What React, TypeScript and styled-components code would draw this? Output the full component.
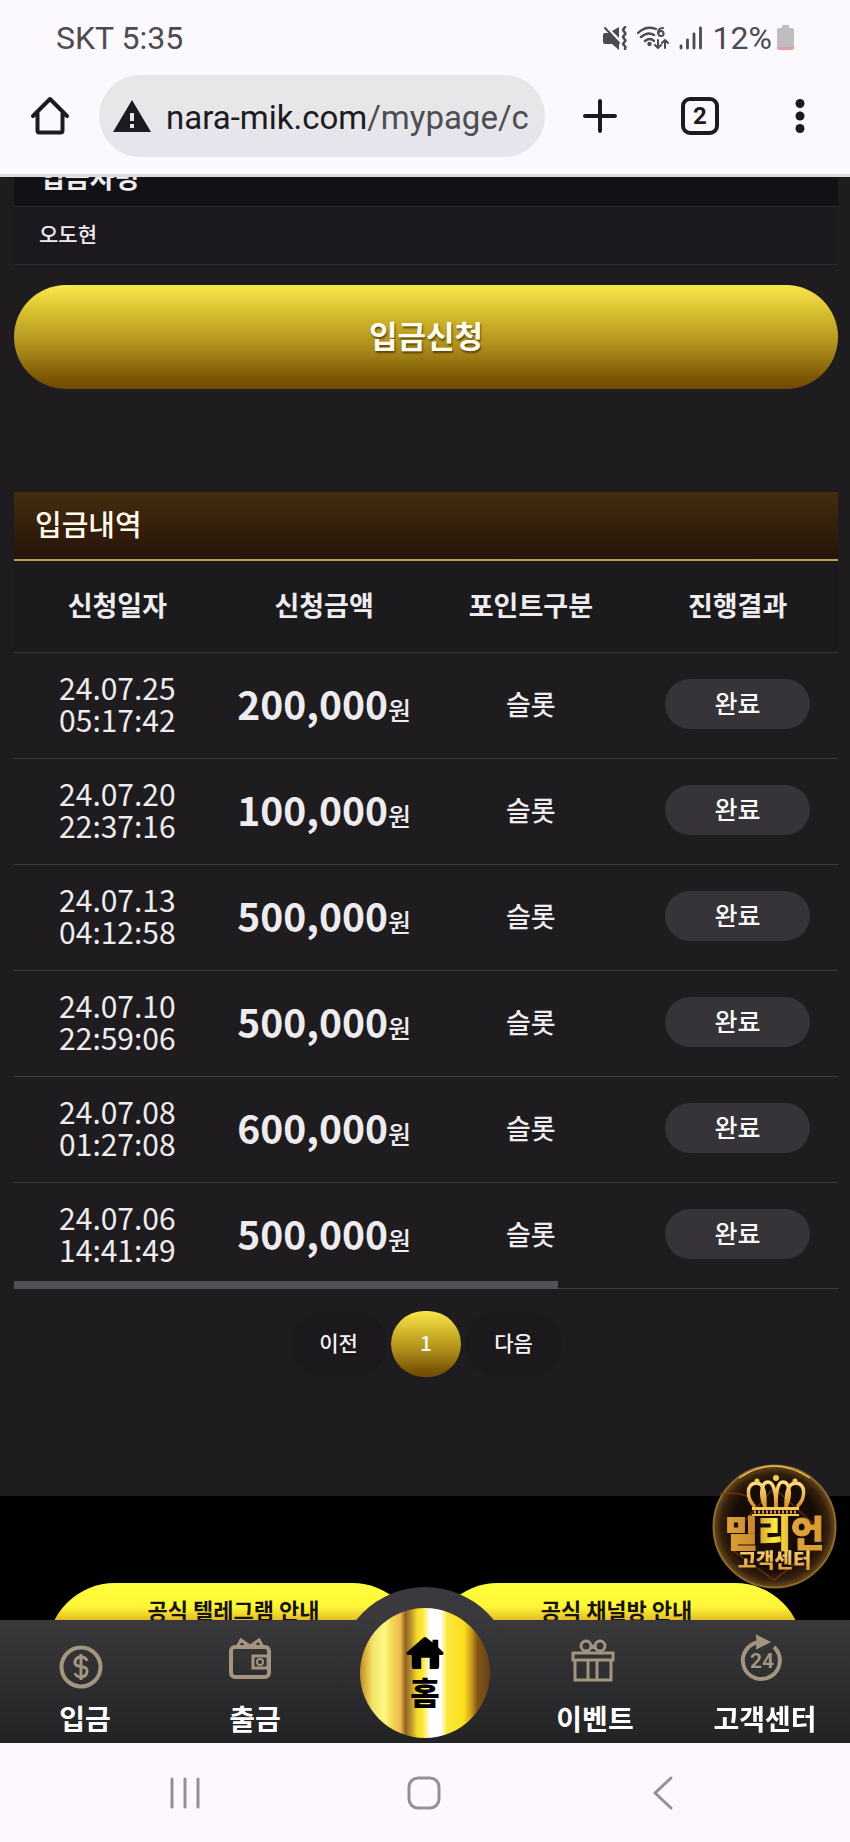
import React from 'react';
import styled, { createGlobalStyle } from 'styled-components';

const KR = '"Noto Sans CJK KR", "Noto Sans", sans-serif';
const GOLD = 'linear-gradient(#fbe74b 0%, #d3b92c 30%, #a98a1a 62%, #7a5604 90%, #6f4a08 100%)';

const GlobalStyle = createGlobalStyle`
  * { box-sizing: border-box; }
  body { margin: 0; background: #1f1c20; font-family: ${KR}; }
  button { border: 0; padding: 0; background: none; color: inherit; font-family: inherit; cursor: pointer; }
  a { color: inherit; text-decoration: none; }
`;

const Phone = styled.div`
  height: 100vh;
  display: flex;
  flex-direction: column;
`;

/* ---------- browser chrome ---------- */

const Chrome = styled.header`
  flex: none;
  background: #fbf9fe;
  border-bottom: 3px solid #dcdbe0;
  font-family: Roboto, sans-serif;
`;

const StatusBar = styled.div`
  height: 75px;
  padding: 0 56px;
  display: flex;
  align-items: center;
  justify-content: space-between;
  color: #4c4b4f;
  font-size: 32px;
`;

const StatusIcons = styled.div`
  display: flex;
  align-items: center;
  gap: 10px;
`;

const Battery = styled.span`
  display: flex;
  align-items: center;
  gap: 5px;
`;

const Toolbar = styled.div`
  display: flex;
  align-items: center;
  padding: 0 0 17px 30px;
`;

const HomeButton = styled.button`
  width: 40px;
  height: 40px;
  margin-right: 29px;
`;

const AddressBar = styled.div`
  flex: 1;
  min-width: 0;
  height: 82px;
  display: flex;
  align-items: center;
  gap: 15px;
  padding: 0 14px;
  margin-right: 5px;
  border-radius: 41px;
  background: linear-gradient(#e7e6e9 50%, #e6e4ef);
`;

const Url = styled.span`
  padding-top: 3px;
  color: #1c1b1f;
  font-size: 33px;
  line-height: 40px;
  white-space: nowrap;
  overflow: hidden;
`;

const UrlPath = styled.span`
  color: #4e4d52;
`;

const ToolButton = styled.button`
  width: 100px;
  height: 64px;
  display: flex;
  align-items: center;
  justify-content: center;
`;

const TabCount = styled.span`
  width: 38px;
  height: 38px;
  border: 4px solid #1c1b1f;
  border-radius: 9px;
  color: #1c1b1f;
  font: 700 24px/30px Roboto, sans-serif;
  text-align: center;
`;

/* ---------- web page ---------- */

const PageArea = styled.div`
  position: relative;
  flex: 1;
  min-height: 0;
  display: flex;
  flex-direction: column;
`;

const PageScroll = styled.main`
  flex: 1;
  min-height: 0;
  overflow-y: auto;
  scrollbar-width: none;
  background: #1f1c20;
  color: #eeecef;
`;

const Content = styled.div`
  padding: 0 12px 0 14px;
`;

const Field = styled.div`
  margin-top: -28px;
  margin-bottom: 20px;
  background: #1b191d;
`;

const FieldLabel = styled.label`
  display: block;
  height: 58px;
  padding: 8px 26px 0;
  background: #121115;
  border-bottom: 1px solid #2e2d31;
  font-size: 27px;
  font-weight: 700;
  line-height: 40px;
`;

const FieldInput = styled.input`
  display: block;
  width: 100%;
  height: 58px;
  padding: 0 25px 6px;
  border: 0;
  border-bottom: 1px solid #2e2d31;
  background: none;
  color: #eeecef;
  font: 500 21px ${KR};
`;

const SubmitButton = styled.button`
  display: block;
  width: 100%;
  height: 104px;
  padding-bottom: 6px;
  border-radius: 52px;
  background: ${GOLD};
  color: #fffdf2;
  font-size: 31px;
  font-weight: 700;
  text-shadow: 1px 2px 2px rgba(60, 40, 0, 0.7);
`;

const SectionTitle = styled.h2`
  margin: 103px 0 0;
  height: 69px;
  padding: 0 21px;
  border-bottom: 2px solid #bba04c;
  background: linear-gradient(#442d0d, #26130a);
  color: #fff9ec;
  font-size: 29px;
  font-weight: 500;
  line-height: 62px;
`;

const TableFrame = styled.div`
  position: relative;
  overflow: hidden;
`;

const Table = styled.table`
  width: calc(100% + 3px);
  table-layout: fixed;
  border-collapse: collapse;
`;

const HeadCell = styled.th`
  height: 91px;
  padding: 0 0 4px;
  border-bottom: 1px solid #333236;
  background: #1b1a1c;
  font-size: 27px;
  font-weight: 700;
`;

const Cell = styled.td`
  height: 106px;
  padding: 0 0 4px;
  border-bottom: 1px solid #3b3a3e;
  text-align: center;
  font-size: 27px;
  font-weight: 500;
`;

const DateText = styled.time`
  display: block;
  font-size: 30px;
  font-weight: 400;
  line-height: 32px;
`;

const Amount = styled.span`
  font-size: 25px;
  white-space: nowrap;
`;

const AmountValue = styled.strong`
  font-size: 39px;
  line-height: 50px;
`;

const StatusPill = styled.span`
  display: block;
  width: 145px;
  height: 50px;
  margin: 2px auto 0;
  border-radius: 25px;
  background: #363438;
  color: #fbfafc;
  font-size: 25px;
  font-weight: 500;
  line-height: 46px;
`;

const ScrollThumb = styled.div`
  position: absolute;
  left: 0;
  bottom: 0;
  width: 66%;
  height: 8px;
  background: #535156;
`;

const Pagination = styled.nav`
  display: flex;
  justify-content: center;
  align-items: center;
  gap: 4px;
  padding: 22px 0 119px;
`;

const PageButton = styled.button<{ $current?: boolean }>`
  width: ${(p) => (p.$current ? 70 : 97)}px;
  height: ${(p) => (p.$current ? 66 : 64)}px;
  padding-bottom: 4px;
  border-radius: 35px;
  background: ${(p) => (p.$current ? GOLD : '#1b191c')};
  color: #f6f4f7;
  font-size: 21px;
  font-weight: 500;
`;

const Footer = styled.footer`
  min-height: 190px;
  padding: 87px 47px 0;
  background: #000;
  display: grid;
  grid-template-columns: 1fr 1fr;
  gap: 10px;
`;

const PromoLink = styled.a`
  height: 136px;
  padding-top: 6px;
  border-radius: 68px;
  background: linear-gradient(#ffff3e 0, #fdf636 24px, #dcae20 40px, #a87a10 100%);
  color: #17120a;
  font-size: 22px;
  font-weight: 700;
  line-height: 40px;
  text-align: center;
`;

const CenterBadge = styled.a`
  position: absolute;
  right: 13px;
  bottom: 31px;
  width: 125px;
  height: 125px;
`;

/* ---------- bottom navigation ---------- */

const BottomNav = styled.nav`
  position: relative;
  flex: none;
  height: 123px;
  display: grid;
  grid-template-columns: repeat(5, 1fr);
  background: linear-gradient(#39383b, #232225);
`;

const NavItem = styled.a`
  display: flex;
  flex-direction: column;
  align-items: center;
  justify-content: space-between;
  padding: 14px 0 5px;
  color: #fff;
  font-size: 28px;
  font-weight: 700;
  line-height: 40px;
  white-space: nowrap;
`;

const NavIcon = styled.svg<{ $low?: boolean }>`
  width: 50px;
  height: 50px;
  margin: ${(p) => (p.$low ? 8 : 0)}px 8px 0 0;
  fill: none;
  stroke: #a3957e;
  stroke-width: 4;
`;

const HomeRing = styled.div`
  position: absolute;
  left: 50%;
  top: -33px;
  width: 176px;
  height: 156px;
  margin-left: -88px;
  border-radius: 88px 88px 0 0;
  background: linear-gradient(#3b393d 33px, #39383b 33px, #232225);
  display: flex;
  justify-content: center;
  padding-top: 21px;
`;

const HomeLink = styled.a`
  width: 130px;
  height: 130px;
  border-radius: 50%;
  display: flex;
  flex-direction: column;
  align-items: center;
  padding-top: 28px;
  background: linear-gradient(
    90deg,
    #b98b2a 0%, #dcb941 5%, #f3e46c 10%, #fdfa84 19%, #f6dc58 24%, #efb950 31%,
    #8f6420 35%, #b98f2c 39%, #f4dc30 44%, #fbe92e 48%, #fff 54%, #fff 62%,
    #fbe83c 67%, #fbe01e 80%, #c8971a 86%, #855716 90%, #64421a 100%
  );
  color: #000;
  font-size: 32px;
  font-weight: 900;
  line-height: 42px;
`;

const SystemNav = styled.div`
  flex: none;
  height: 99px;
  display: flex;
  align-items: center;
  justify-content: space-around;
  padding: 0 68px 0 65px;
  background: #fdf8fe;
`;

const SystemButton = styled.button`
  width: 40px;
  height: 40px;
`;

const Stroke = styled.svg`
  display: block;
  fill: none;
  stroke-linecap: round;
  stroke-linejoin: round;
`;

const ROWS = [
  ['24.07.25', '05:17:42', '200,000'],
  ['24.07.20', '22:37:16', '100,000'],
  ['24.07.13', '04:12:58', '500,000'],
  ['24.07.10', '22:59:06', '500,000'],
  ['24.07.08', '01:27:08', '600,000'],
  ['24.07.06', '14:41:49', '500,000'],
];

function BrowserChrome() {
  return (
    <Chrome>
      <StatusBar>
        <span>SKT 5:35</span>
        <StatusIcons>
          <Stroke width="24" height="24" viewBox="0 0 24 24" stroke="#4c4b4f" strokeWidth="2">
            <path d="M9 5l7-4v11z" fill="#4c4b4f" stroke="none" />
            <path d="M0 9q0-2 2-2h4l10 10v7l-7-6H2q-2 0-2-2z" fill="#4c4b4f" stroke="none" />
            <path d="M3 1l14 15" stroke="#fbf9fe" strokeWidth="2" />
            <path d="M2 2l14 15" />
            <path d="M22 1l-2 3 2.500 3.500L20 11l2.500 3.500L20 18l2.500 3-.5 2" strokeWidth="2.500" />
          </Stroke>
          <Stroke width="32" height="24" viewBox="0 0 32 24" stroke="#4c4b4f" strokeWidth="2.400">
            <path d="M1 7Q9-1 19 3M4 11q7-6 13-2M8 15q5-4 9 0" />
            <circle cx="12.500" cy="18" r="1" />
            <path d="M26 2q-5 0-5 5" strokeWidth="2" />
            <circle cx="24" cy="7.500" r="2.600" strokeWidth="2" />
            <path d="M21 14v8m-3-3l3 3 3-3M28 22v-8m-3 3l3-3 3 3" strokeWidth="2" />
          </Stroke>
          <Stroke width="24" height="24" viewBox="0 0 24 24" stroke="#4c4b4f" strokeWidth="2.800">
            <path d="M2 20v2M8.500 14v8M15 8v14M21.500 2v20" />
          </Stroke>
          <Battery>
            12%
            <svg width="17" height="25" viewBox="0 0 17 25">
              <path d="M5 0h7v3h3q2 0 2 2v17H0V5q0-2 2-2h3z" fill="#bfbdc0" />
              <path d="M0 22h17v1q0 2-2 2H2q-2 0-2-2z" fill="#e0a0a0" />
            </svg>
          </Battery>
        </StatusIcons>
      </StatusBar>
      <Toolbar>
        <HomeButton aria-label="홈페이지">
          <Stroke width="40" height="40" viewBox="0 0 40 40" stroke="#1c1b1f" strokeWidth="4">
            <path d="M3 20L20 3l17 17M7.500 17v17.500q0 2 2 2h21q2 0 2-2V17" />
          </Stroke>
        </HomeButton>
        <AddressBar>
          <svg width="38" height="32" viewBox="0 0 38 32">
            <path d="M19 0l19 32H0z" fill="#1c1b1f" />
            <path d="M17 13h4v8h-4zM17 24h4v4h-4z" fill="#e7e6e9" />
          </svg>
          <Url>
            nara-mik.com<UrlPath>/mypage/c</UrlPath>
          </Url>
        </AddressBar>
        <ToolButton aria-label="새 탭">
          <Stroke width="36" height="36" viewBox="0 0 36 36" stroke="#1c1b1f" strokeWidth="4">
            <path d="M18 3v30M3 18h30" />
          </Stroke>
        </ToolButton>
        <ToolButton aria-label="탭 전환">
          <TabCount>2</TabCount>
        </ToolButton>
        <ToolButton aria-label="더보기">
          <svg width="10" height="36" viewBox="0 0 10 36" fill="#1c1b1f">
            <circle cx="5" cy="5.500" r="4.500" />
            <circle cx="5" cy="18" r="4.500" />
            <circle cx="5" cy="30.500" r="4.500" />
          </svg>
        </ToolButton>
      </Toolbar>
    </Chrome>
  );
}

function BadgeArt() {
  return (
    <svg width="125" height="125" viewBox="0 0 125 125">
      <defs>
        <radialGradient id="orb">
          <stop offset="0" stopColor="#1a0d04" />
          <stop offset="0.700" stopColor="#160b05" />
          <stop offset="0.880" stopColor="#35200c" />
          <stop offset="1" stopColor="#6b4a1c" />
        </radialGradient>
        <linearGradient id="gold" x1="0" y1="0" x2="1" y2="0">
          <stop offset="0" stopColor="#e0a238" />
          <stop offset="0.300" stopColor="#c98a2c" />
          <stop offset="0.500" stopColor="#ffee3c" />
          <stop offset="0.700" stopColor="#e0a43c" />
          <stop offset="1" stopColor="#d8982f" />
        </linearGradient>
        <linearGradient id="pale" x1="0" y1="0" x2="0" y2="1">
          <stop offset="0" stopColor="#ffe07e" />
          <stop offset="1" stopColor="#d9902e" />
        </linearGradient>
      </defs>
      <circle cx="62.500" cy="62.500" r="61" fill="url(#orb)" stroke="#8f6a2e" strokeWidth="2" />
      <path d="M27 14Q62-10 98 14" fill="none" stroke="#e9bf55" strokeWidth="1.500" />
      <path d="M8 30q18-3 30 4M62 24l42 38M62 24L30 60M20 86l42 30 36-28" fill="none" stroke="#7b3d12" strokeWidth="1.500" opacity="0.700" />
      <g fill="none" stroke="url(#pale)" strokeWidth="3.500">
        <path d="M43 43C34 34 34 20 44 19c9 0 9 12 9 24" />
        <path d="M53 43C47 30 50 18 56 18c6 0 8 12 8 25" />
        <path d="M74 43c6-13 3-25-3-25s-7 12-7 25" />
        <path d="M85 43c9-9 9-23-1-24-9 0-10 12-10 24" />
      </g>
      <g fill="#f6ca5c">
        <circle cx="45" cy="17" r="2.500" />
        <circle cx="64" cy="14" r="3" />
        <circle cx="83" cy="17" r="2.500" />
        <rect x="40" y="43" width="47" height="3" />
        <rect x="40" y="50" width="47" height="2" />
      </g>
      <path d="M42 48h43" stroke="#d8a040" strokeWidth="3" strokeDasharray="2 2" />
      <text x="62.500" y="83" textAnchor="middle" fontFamily={KR} fontSize="36" fontWeight="900" fill="url(#gold)" stroke="url(#gold)" strokeWidth="1">밀리언</text>
      <text x="62.500" y="104" textAnchor="middle" fontFamily={KR} fontSize="20" fontWeight="900" fill="url(#pale)">고객센터</text>
    </svg>
  );
}

export default function App() {
  return (
    <Phone>
      <GlobalStyle />
      <BrowserChrome />
      <PageArea>
        <PageScroll>
          <Content>
            <Field>
              <FieldLabel htmlFor="depositor">입금자명</FieldLabel>
              <FieldInput id="depositor" defaultValue="오도현" />
            </Field>
            <SubmitButton>입금신청</SubmitButton>
            <SectionTitle>입금내역</SectionTitle>
            <TableFrame>
              <Table>
                <thead>
                  <tr>
                    {['신청일자', '신청금액', '포인트구분', '진행결과'].map((h) => (
                      <HeadCell key={h} scope="col">{h}</HeadCell>
                    ))}
                  </tr>
                </thead>
                <tbody>
                  {ROWS.map(([date, time, amount]) => (
                    <tr key={date}>
                      <Cell>
                        <DateText>{date}<br />{time}</DateText>
                      </Cell>
                      <Cell>
                        <Amount><AmountValue>{amount}</AmountValue>원</Amount>
                      </Cell>
                      <Cell>슬롯</Cell>
                      <Cell><StatusPill>완료</StatusPill></Cell>
                    </tr>
                  ))}
                </tbody>
              </Table>
              <ScrollThumb />
            </TableFrame>
            <Pagination aria-label="페이지">
              <PageButton>이전</PageButton>
              <PageButton $current aria-current="page">1</PageButton>
              <PageButton>다음</PageButton>
            </Pagination>
          </Content>
          <Footer>
            <PromoLink href="#telegram">공식 텔레그램 안내</PromoLink>
            <PromoLink href="#channel">공식 채널방 안내</PromoLink>
          </Footer>
        </PageScroll>
        <CenterBadge href="#center">
          <BadgeArt />
        </CenterBadge>
      </PageArea>
      <BottomNav>
        <HomeRing>
          <HomeLink href="#home">
            <svg width="38" height="34" viewBox="0 0 40 36">
              <path d="M20 1q1 0 2 1l6 5V4h6v8l5 5q2 3-2 3h-2v12q0 3-3 3h-7V23h-9v12H9q-3 0-3-3V20H3q-4 0-2-3L18 2q1-1 2-1z" />
            </svg>
            홈
          </HomeLink>
        </HomeRing>
        <NavItem href="#deposit">
          <NavIcon $low viewBox="0 0 50 50">
            <circle cx="25" cy="25" r="19.500" />
            <path d="M31 19q-1-4-6-4t-6 4.500 6 5 6 5.500-6 5-6-4M25 12v26" strokeWidth="3" />
          </NavIcon>
          입금
        </NavItem>
        <NavItem href="#withdraw">
          <NavIcon viewBox="0 0 50 50">
            <rect x="5" y="13" width="38" height="30" rx="4" />
            <path d="M11 13l4-7 9 6 9-6 4 7M18 9l6 3 6-3" strokeWidth="3" />
            <rect x="27" y="22" width="15" height="12" strokeWidth="3" />
            <circle cx="34" cy="28" r="3" strokeWidth="2" />
          </NavIcon>
          출금
        </NavItem>
        <span />
        <NavItem href="#event">
          <NavIcon viewBox="0 0 50 50">
            <path d="M7 19h40v7H7zM9 27v19h36V27M22 27v19M31 27v19" strokeWidth="3" />
            <circle cx="20" cy="12" r="5" strokeWidth="3" />
            <circle cx="34" cy="12" r="5" strokeWidth="3" />
            <path d="M24 13h6" />
          </NavIcon>
          이벤트
        </NavItem>
        <NavItem href="#support">
          <NavIcon viewBox="0 0 50 50">
            <path d="M38 13A18.500 18.500 0 1 1 25 8" />
            <path d="M21 2q1 5 0 12l12-6z" fill="#a3957e" strokeWidth="2" />
            <text x="26" y="34" textAnchor="middle" fontFamily="Roboto, sans-serif" fontSize="21" fontWeight="700" fill="#a3957e" stroke="none">24</text>
          </NavIcon>
          고객센터
        </NavItem>
      </BottomNav>
      <SystemNav>
        <SystemButton aria-label="최근 앱">
          <Stroke width="40" height="40" viewBox="0 0 40 40" stroke="#929095" strokeWidth="3">
            <path d="M7 6v28M20 6v28M33 6v28" />
          </Stroke>
        </SystemButton>
        <SystemButton aria-label="홈">
          <Stroke width="40" height="40" viewBox="0 0 40 40" stroke="#929095" strokeWidth="3">
            <rect x="5" y="5" width="30" height="30" rx="9" />
          </Stroke>
        </SystemButton>
        <SystemButton aria-label="뒤로">
          <Stroke width="40" height="40" viewBox="0 0 40 40" stroke="#929095" strokeWidth="3">
            <path d="M28 5L12 20l16 15" />
          </Stroke>
        </SystemButton>
      </SystemNav>
    </Phone>
  );
}
